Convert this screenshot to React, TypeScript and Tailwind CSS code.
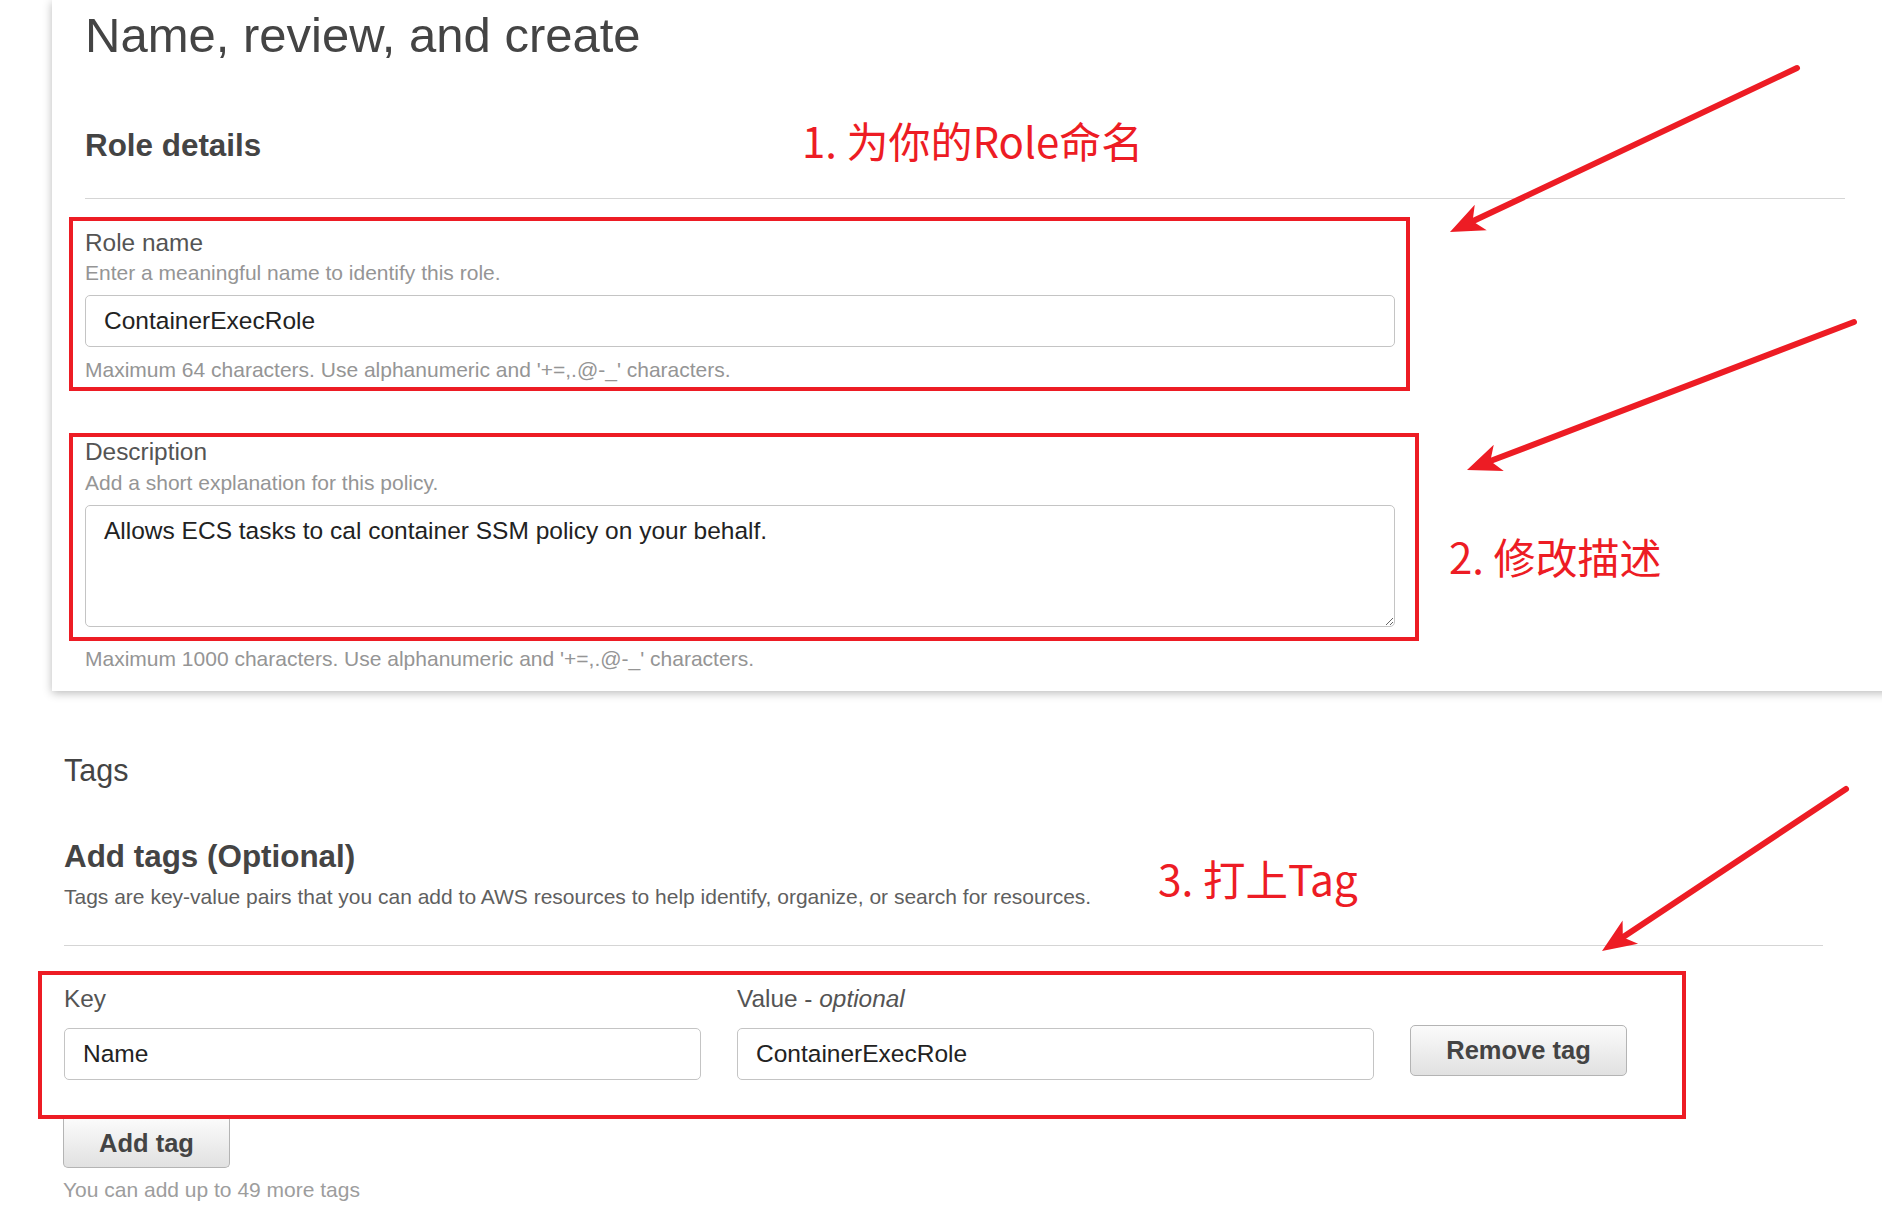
import React from "react";

const RED = "#ed1c24";

interface ArrowProps {
  x1: number;
  y1: number;
  x2: number;
  y2: number;
}

// red annotation arrow, tail at (x1,y1), tip at (x2,y2)
const Arrow: React.FC<ArrowProps> = ({ x1, y1, x2, y2 }) => {
  const dx = x1 - x2;
  const dy = y1 - y2;
  const len = Math.sqrt(dx * dx + dy * dy);
  const ux = dx / len;
  const uy = dy / len;
  const nx = -uy;
  const ny = ux;
  const L = 34;
  const W = 14;
  const notch = 9;
  const pts = [
    [x2, y2],
    [x2 + ux * L + nx * W, y2 + uy * L + ny * W],
    [x2 + ux * (L - notch), y2 + uy * (L - notch)],
    [x2 + ux * L - nx * W, y2 + uy * L - ny * W],
  ]
    .map((p) => p.join(","))
    .join(" ");
  return (
    <g>
      <line
        x1={x1}
        y1={y1}
        x2={x2 + ux * (L - notch)}
        y2={y2 + uy * (L - notch)}
        stroke={RED}
        strokeWidth={6}
        strokeLinecap="round"
      />
      <polygon points={pts} fill={RED} />
    </g>
  );
};

const Helper: React.FC<{ children: React.ReactNode; className?: string }> = ({
  children,
  className = "",
}) => (
  <p className={`text-[21px] leading-[24px] text-[#959595] ${className}`}>{children}</p>
);

const Label: React.FC<{ children: React.ReactNode; className?: string }> = ({
  children,
  className = "",
}) => <p className={`text-[24.4px] leading-[28px] text-[#545454] ${className}`}>{children}</p>;

const TextInput: React.FC<{ value: string; className?: string }> = ({ value, className = "" }) => (
  <input
    readOnly
    defaultValue={value}
    className={`h-[52px] rounded-[5px] border border-[#c4c4c4] bg-white pl-[18px] text-[24.5px] text-[#222] outline-none ${className}`}
  />
);

const GrayButton: React.FC<{ label: string; className?: string }> = ({ label, className = "" }) => (
  <button
    className={`rounded-[5px] border border-[#b4b4b4] bg-linear-to-b from-[#fbfbfb] to-[#e1e1e1] text-[25.5px] font-bold text-[#444] ${className}`}
  >
    {label}
  </button>
);

export default function App() {
  return (
    <div
      className="relative w-[1882px] min-h-[1231px] overflow-hidden bg-white"
      style={{ fontFamily: '"Liberation Sans", Arial, sans-serif' }}
    >
      {/* Role details card */}
      <div className="ml-[52px] w-[1850px] bg-white pt-[7px] pb-[20px] shadow-[0_2px_9px_rgba(0,0,0,0.28)]">
        <div className="pl-[33px]">
          <h1 className="text-[49px] leading-[56px] text-[#444]">Name, review, and create</h1>
          <h2 className="mt-[65px] text-[31.4px] font-bold leading-[36px] text-[#444]">Role details</h2>
          <div className="mt-[34px] h-px w-[1760px] bg-[#d5d5d5]" />
        </div>

        <div className="ml-[17px] mt-[18px] w-[1341px] border-4 pl-[12px] pt-[8px] pb-[5px]" style={{ borderColor: RED }}>
          <Label>Role name</Label>
          <Helper className="mt-[4px]">Enter a meaningful name to identify this role.</Helper>
          <TextInput value="ContainerExecRole" className="mt-[10px] block w-[1310px]" />
          <Helper className="mt-[11px]">Maximum 64 characters. Use alphanumeric and '+=,.@-_' characters.</Helper>
        </div>

        <div className="ml-[17px] mt-[42px] w-[1350px] border-4 pl-[12px] pt-[1px] pb-[10px]" style={{ borderColor: RED }}>
          <Label>Description</Label>
          <Helper className="mt-[5px]">Add a short explanation for this policy.</Helper>
          <textarea
            readOnly
            defaultValue="Allows ECS tasks to cal container SSM policy on your behalf."
            className="mt-[10px] block h-[122px] w-[1310px] rounded-[5px] border border-[#c4c4c4] bg-white pl-[18px] pt-[11px] text-[24.5px] leading-[28px] text-[#222] outline-none"
          />
        </div>
        <Helper className="ml-[33px] mt-[6px]">Maximum 1000 characters. Use alphanumeric and '+=,.@-_' characters.</Helper>
      </div>

      {/* Tags section */}
      <div className="pl-[38px]">
        <div className="pl-[26px]">
          <h3 className="mt-[62px] text-[30.5px] leading-[34px] text-[#444]">Tags</h3>
          <h2 className="mt-[52px] text-[31.4px] font-bold leading-[36px] text-[#444]">Add tags (Optional)</h2>
          <p className="mt-[10px] text-[21px] leading-[24px] text-[#5f5f5f]">
            Tags are key-value pairs that you can add to AWS resources to help identify, organize, or search for resources.
          </p>
          <div className="mt-[36px] h-px w-[1759px] bg-[#d5d5d5]" />
        </div>

        <div className="mt-[25px] w-[1648px] border-4 pl-[22px] pt-[10px] pb-[35px]" style={{ borderColor: RED }}>
          <div className="grid grid-cols-[637px_637px_217px] gap-x-[36px]">
            <Label>Key</Label>
            <Label>
              Value - <span className="italic">optional</span>
            </Label>
            <div />
            <TextInput value="Name" className="mt-[15px] w-[637px]" />
            <TextInput value="ContainerExecRole" className="mt-[15px] w-[637px]" />
            <GrayButton label="Remove tag" className="mt-[12px] h-[51px] w-[217px]" />
          </div>
        </div>

        <div className="pl-[25px]">
          <GrayButton label="Add tag" className="h-[49px] w-[167px] rounded-t-none border-t-0" />
          <p className="mt-[10px] text-[21px] leading-[24px] text-[#9d9d9d]">You can add up to 49 more tags</p>
        </div>
      </div>

      {/* annotations */}
      <div
        className="absolute left-[802px] top-[119px] text-[42px] leading-[42px] whitespace-nowrap"
        style={{ color: RED, fontFamily: '"Noto Sans CJK SC", sans-serif' }}
      >
        1. 为你的Role命名
      </div>
      <div
        className="absolute left-[1449px] top-[535px] text-[42px] leading-[42px] whitespace-nowrap"
        style={{ color: RED, fontFamily: '"Noto Sans CJK SC", sans-serif' }}
      >
        2. 修改描述
      </div>
      <div
        className="absolute left-[1158px] top-[857px] text-[42.5px] leading-[42px] whitespace-nowrap"
        style={{ color: RED, fontFamily: '"Noto Sans CJK SC", sans-serif' }}
      >
        3. 打上Tag
      </div>
      <svg className="pointer-events-none absolute inset-0" width={1882} height={1231}>
        <Arrow x1={1797} y1={68} x2={1450} y2={232} />
        <Arrow x1={1854} y1={322} x2={1467} y2={470} />
        <Arrow x1={1846} y1={789} x2={1602} y2={951} />
      </svg>
    </div>
  );
}
